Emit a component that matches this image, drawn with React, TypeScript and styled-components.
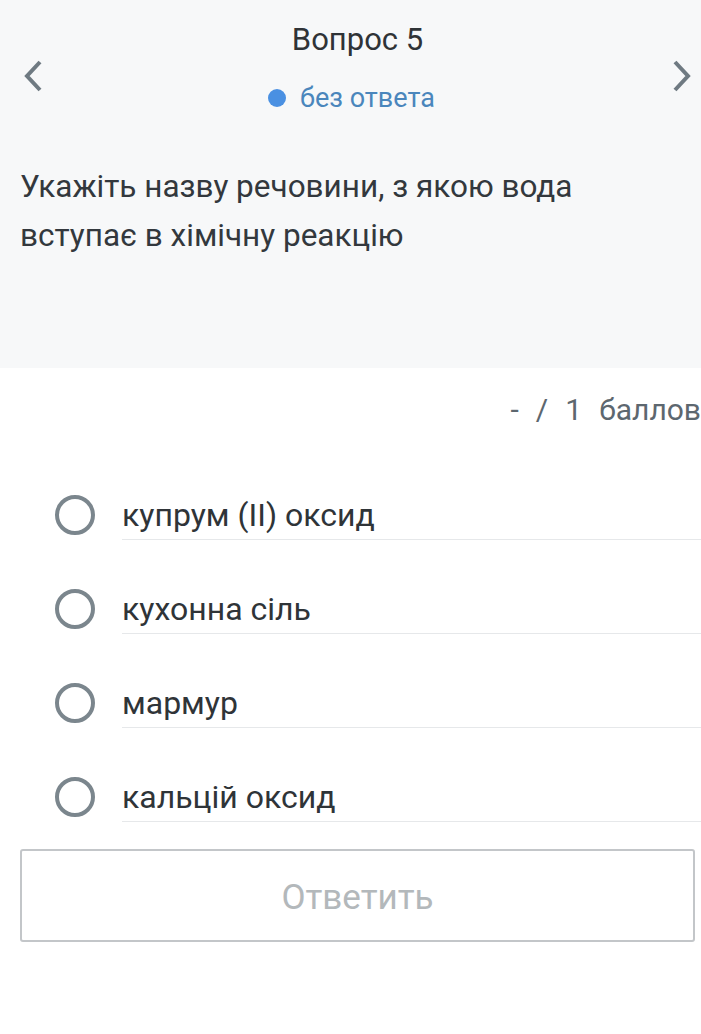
import React, { useState } from 'react';
import styled, { createGlobalStyle } from 'styled-components';

// --- ESTILOS ---

const GlobalStyle = createGlobalStyle`
  html, body {
    margin: 0;
    padding: 0;
    background: #ffffff;
    overflow-x: hidden;
  }
  body {
    font-family: Roboto, 'Noto Sans', 'Liberation Sans', sans-serif;
    color: #333a40;
  }
`;

const Page = styled.div`
  width: 701px;
  min-height: 1034px;
  overflow: hidden;
  background: #ffffff;
`;

const Header = styled.section`
  background: #f7f8f9;
  height: 368px;
  box-sizing: border-box;
  padding-top: 22px;
`;

const NavRow = styled.div`
  display: flex;
  align-items: flex-start;
`;

const NavButton = styled.button<{ $side: 'left' | 'right' }>`
  border: none;
  background: transparent;
  padding: 0;
  margin-top: 38px;
  ${(p) => (p.$side === 'left' ? 'margin-left: 24px;' : 'margin-right: 10px;')}
  width: 20px;
  height: 32px;
  display: flex;
  align-items: center;
  justify-content: center;
  cursor: pointer;
`;

const Center = styled.div`
  flex: 1;
  display: flex;
  flex-direction: column;
  align-items: center;
`;

const Title = styled.h1`
  margin: 0;
  font-size: 31px;
  font-weight: 400;
  line-height: 36px;
  color: #2f3337;
`;

const Status = styled.div`
  display: flex;
  align-items: center;
  gap: 14px;
  margin-top: 24px;
  padding-right: 12px;
  font-size: 27px;
  line-height: 32px;
  color: #4a86bc;
`;

const Dot = styled.span`
  width: 18px;
  height: 18px;
  border-radius: 50%;
  background: #4a90e2;
`;

const Question = styled.p`
  margin: 48px 0 0;
  padding: 0 20px;
  font-size: 31.5px;
  line-height: 49px;
  color: #33383d;
`;

const Score = styled.div`
  display: flex;
  justify-content: flex-end;
  gap: 17px;
  margin: 24px 0 0 0;
  white-space: nowrap;
  font-size: 30px;
  line-height: 36px;
  color: #5d676f;
`;

const OptionList = styled.div`
  display: flex;
  flex-direction: column;
  gap: 51px;
  margin-top: 69px;
`;

const OptionRow = styled.label`
  display: flex;
  align-items: flex-start;
  gap: 27px;
  padding-left: 55px;
  cursor: pointer;
`;

const Radio = styled.span<{ $checked: boolean }>`
  flex: none;
  box-sizing: border-box;
  width: 40px;
  height: 40px;
  margin-top: -2px;
  border-radius: 50%;
  border: 4px solid ${(p) => (p.$checked ? '#4a90e2' : '#7b868d')};
  display: flex;
  align-items: center;
  justify-content: center;

  &::after {
    content: '';
    width: 18px;
    height: 18px;
    border-radius: 50%;
    background: ${(p) => (p.$checked ? '#4a90e2' : 'transparent')};
  }
`;

const OptionText = styled.span`
  flex: 1;
  font-size: 32px;
  line-height: 36px;
  padding-bottom: 6px;
  border-bottom: 1px solid #e6e8ea;
  color: #2f3438;
`;

const SubmitButton = styled.button<{ $active: boolean }>`
  display: block;
  box-sizing: border-box;
  width: 675px;
  height: 93px;
  margin: 27px 0 0 20px;
  padding: 4px 0 0;
  border: 2px solid #c3c6c9;
  border-radius: 3px;
  background: #ffffff;
  font-family: inherit;
  font-size: 35px;
  color: ${(p) => (p.$active ? '#4a86bc' : '#b3b8bb')};
  cursor: ${(p) => (p.$active ? 'pointer' : 'default')};
`;

// --- DADOS ---

const options = ['купрум (II) оксид', 'кухонна сіль', 'мармур', 'кальцій оксид'];

function Chevron({ dir }: { dir: 'left' | 'right' }) {
  const d = dir === 'left' ? 'M16 2 L3 16 L16 30' : 'M4 2 L17 16 L4 30';
  return (
    <svg width="20" height="32" viewBox="0 0 20 32">
      <path d={d} fill="none" stroke="#6f7a82" strokeWidth="4" strokeLinejoin="miter" />
    </svg>
  );
}

export default function App() {
  const [selected, setSelected] = useState<number | null>(null);

  return (
    <>
      <GlobalStyle />
      <Page>
        <Header>
          <NavRow>
            <NavButton $side="left" aria-label="prev">
              <Chevron dir="left" />
            </NavButton>
            <Center>
              <Title>Вопрос 5</Title>
              <Status>
                <Dot />
                без ответа
              </Status>
            </Center>
            <NavButton $side="right" aria-label="next">
              <Chevron dir="right" />
            </NavButton>
          </NavRow>
          <Question>Укажіть назву речовини, з якою вода вступає в хімічну реакцію</Question>
        </Header>

        <Score>
          <span>-</span>
          <span>/</span>
          <span>1</span>
          <span>баллов</span>
        </Score>

        <OptionList>
          {options.map((o, i) => (
            <OptionRow key={o} onClick={() => setSelected(i)}>
              <Radio $checked={selected === i} />
              <OptionText>{o}</OptionText>
            </OptionRow>
          ))}
        </OptionList>

        <SubmitButton $active={selected !== null} disabled={selected === null}>
          Ответить
        </SubmitButton>
      </Page>
    </>
  );
}
